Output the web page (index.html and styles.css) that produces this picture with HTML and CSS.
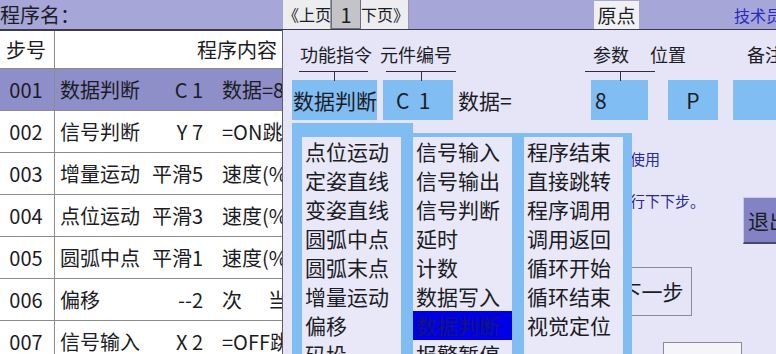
FILE: index.html
```html
<!DOCTYPE html>
<html lang="zh">
<head>
    <meta charset="UTF-8">
    <title>程序编辑</title>
    <link rel="stylesheet" href="styles.css">
</head>
<body>
    <div class="screen">
        <div class="topbar">
            <span class="prog-name">程序名：</span>
            <div class="pager">
                <span class="pg-btn">《上页</span>
                <span class="pg-num">1</span>
                <span class="pg-btn">下页》</span>
            </div>
            <span class="origin">原点</span>
            <span class="user">技术员</span>
        </div>

        <div class="steps">
            <div class="row head">
                <div class="no">步号</div>
                <div class="body"><span class="head-title">程序内容</span></div>
            </div>
            <div class="row sel">
                <div class="no">001</div>
                <div class="body"><span class="name">数据判断</span><span class="code">C 1</span><span class="rest">数据=8</span></div>
            </div>
            <div class="row">
                <div class="no">002</div>
                <div class="body"><span class="name">信号判断</span><span class="code">Y 7</span><span class="rest">=ON跳转</span></div>
            </div>
            <div class="row">
                <div class="no">003</div>
                <div class="body"><span class="name">增量运动</span><span class="code">平滑5</span><span class="rest">速度(%)</span></div>
            </div>
            <div class="row">
                <div class="no">004</div>
                <div class="body"><span class="name">点位运动</span><span class="code">平滑3</span><span class="rest">速度(%)</span></div>
            </div>
            <div class="row">
                <div class="no">005</div>
                <div class="body"><span class="name">圆弧中点</span><span class="code">平滑1</span><span class="rest">速度(%)</span></div>
            </div>
            <div class="row">
                <div class="no">006</div>
                <div class="body"><span class="name">偏移</span><span class="code">--2</span><span class="rest">次<span class="gap"></span>当前</span></div>
            </div>
            <div class="row">
                <div class="no">007</div>
                <div class="body"><span class="name">信号输入</span><span class="code">X 2</span><span class="rest">=OFF跳转</span></div>
            </div>
        </div>

        <div class="dialog">
            <div class="labels">
                <span class="lbl l-func">功能指令</span>
                <span class="lbl l-elem">元件编号</span>
                <span class="lbl l-param">参数</span>
                <span class="lbl l-pos">位置</span>
                <span class="lbl l-note">备注</span>
            </div>
            <div class="links">
                <span class="link k-func"></span>
                <span class="link k-elem"></span>
                <span class="link k-param"></span>
            </div>
            <div class="fields">
                <span class="field f-func">数据判断</span>
                <span class="field f-elem">C&nbsp;&nbsp;1</span>
                <span class="field-text">数据=</span>
                <span class="field f-param">8</span>
                <span class="field f-pos">P</span>
                <span class="field f-note"></span>
            </div>
            <div class="info-row">
                <div class="note">
                    <div>当元件数据等于设定参数时条件成立，供条件跳转使用</div>
                    <div>数据不相等时条件不成立，程序将跳过下一步去执行下下步。</div>
                </div>
                <div class="btn exit">退出</div>
            </div>
            <div class="btn next">下一步</div>
            <div class="btn spare"></div>

            <div class="dropdown">
                <ul class="col">
                    <li>点位运动</li>
                    <li>定姿直线</li>
                    <li>变姿直线</li>
                    <li>圆弧中点</li>
                    <li>圆弧末点</li>
                    <li>增量运动</li>
                    <li>偏移</li>
                    <li>码垛</li>
                </ul>
                <ul class="col">
                    <li>信号输入</li>
                    <li>信号输出</li>
                    <li>信号判断</li>
                    <li>延时</li>
                    <li>计数</li>
                    <li>数据写入</li>
                    <li class="active">数据判断</li>
                    <li>报警暂停</li>
                </ul>
                <ul class="col">
                    <li>程序结束</li>
                    <li>直接跳转</li>
                    <li>程序调用</li>
                    <li>调用返回</li>
                    <li>循环开始</li>
                    <li>循环结束</li>
                    <li>视觉定位</li>
                </ul>
            </div>
        </div>
    </div>
</body>
</html>
```

FILE: styles.css
```css
body {
    margin: 0;
    font-family: "Noto Sans CJK SC", "Noto Sans", sans-serif;
    color: #1c1c24;
    background: #ffffff;
}

.screen {
    position: relative;
    width: 776px;
    height: 354px;
    overflow: hidden;
}

/* top bar */
.topbar {
    display: flex;
    align-items: center;
    height: 29px;
    background: #a6a6d8;
    border-bottom: 2px solid #3c3c48;
    white-space: nowrap;
}

    .topbar > * {
        flex: none;
    }

.prog-name {
    width: 283px;
    font-size: 20px;
    line-height: 29px;
}

.pager {
    display: flex;
    height: 29px;
}

    .pager .pg-btn {
        width: 47px;
        background: #ededf0;
        font-size: 16px;
        line-height: 29px;
        text-align: center;
        border-right: 1px solid #9a9aa0;
    }

    .pager .pg-num {
        width: 28px;
        background: #c4c4c8;
        border: 1px solid #707078;
        border-top: 0;
        font-size: 20px;
        line-height: 30px;
        text-align: center;
    }

.origin {
    margin-left: 185px;
    width: 45px;
    height: 28px;
    background: #f0f0f5;
    font-size: 19px;
    line-height: 28px;
    text-align: center;
}

.user {
    margin-left: 95px;
    color: #2a2ac0;
    font-size: 16px;
}

/* step table */
.row {
    display: flex;
    height: 42px;
    box-sizing: border-box;
    border-bottom: 1px solid #8c8c8c;
    font-size: 20px;
    white-space: nowrap;
}

    .row.head {
        height: 38px;
        background: #ffffff;
    }

    .row.sel {
        background: #8e8ec8;
    }

    .row .no {
        width: 55px;
        flex: none;
        box-sizing: border-box;
        border-right: 1px solid #8c8c8c;
        display: flex;
        align-items: center;
        justify-content: center;
        padding-right: 2px;
    }

    .row .body {
        flex: 1;
        display: flex;
        align-items: center;
        padding-left: 5px;
        overflow: hidden;
    }

        .row .body > span {
            flex: none;
        }

.head-title {
    margin-left: 137px;
}

.name {
    width: 90px;
}

.code {
    width: 53px;
    text-align: right;
}

.rest {
    margin-left: 19px;
}

    .rest .gap {
        display: inline-block;
        width: 26px;
    }

/* dialog */
.dialog {
    position: absolute;
    left: 282px;
    top: 30px;
    right: 0;
    bottom: 0;
    background: #e5e5f7;
    border-left: 1px solid #5c5c68;
    white-space: nowrap;
    overflow: hidden;
}

.labels,
.links,
.fields,
.info-row {
    display: flex;
}

    .labels > *,
    .links > *,
    .fields > *,
    .info-row > * {
        flex: none;
    }

.labels {
    padding-top: 12px;
    font-size: 18px;
    line-height: 24px;
}

.l-func { margin-left: 17px; width: 74px; }
.l-elem { margin-left: 6px; width: 73px; }
.l-param { margin-left: 140px; width: 37px; }
.l-pos { margin-left: 20px; width: 37px; }
.l-note { margin-left: 60px; }

.links {
    margin-top: 5px;
    height: 9px;
}

.link {
    position: relative;
    height: 9px;
    box-sizing: border-box;
    border-top: 1px solid #303038;
}

    .link::after {
        content: "";
        position: absolute;
        left: 50%;
        top: 0;
        width: 1px;
        height: 9px;
        background: #303038;
    }

.k-func { margin-left: 16px; width: 69px; }
.k-elem { margin-left: 18px; width: 70px; }
.k-param { margin-left: 129px; width: 70px; }

.fields {
    align-items: center;
    height: 40px;
    font-size: 21px;
}

.field {
    height: 40px;
    line-height: 40px;
    background: #80bdf3;
    box-sizing: border-box;
}

.f-func { margin-left: 9px; width: 85px; padding-left: 1px; }
.f-elem { margin-left: 6px; width: 70px; padding-left: 13px; }
.field-text { margin-left: 5px; width: 133px; }
.f-param { width: 57px; padding-left: 4px; }
.f-pos { margin-left: 20px; width: 50px; text-align: center; }
.f-note { margin-left: 15px; width: 60px; }

.info-row {
    align-items: flex-start;
}

.note {
    margin-left: 17px;
    margin-top: 18px;
    width: 443px;
    color: #2828a0;
    font-size: 15px;
    line-height: 42px;
}

.btn {
    box-sizing: border-box;
    font-size: 21px;
    text-align: left;
}

    .btn.exit {
        margin-top: 77px;
        width: 60px;
        height: 47px;
        line-height: 45px;
        padding-left: 4px;
        background: #8282c4;
        border: 1px solid #c8c8e8;
        border-right-color: #48486c;
        border-bottom: 2px solid #48486c;
    }

    .btn.next {
        margin-left: 329px;
        margin-top: 23px;
        width: 80px;
        height: 49px;
        line-height: 47px;
        text-align: center;
        border: 1px solid #8c8c90;
    }

    .btn.spare {
        margin-left: 380px;
        margin-top: 26px;
        width: 79px;
        height: 40px;
        background: #f4f4fa;
        border: 1px solid #8c8c90;
    }

/* function picker */
.dropdown {
    position: absolute;
    left: 9px;
    top: 103px;
    width: 340px;
    height: 240px;
    display: flex;
    gap: 12px;
    padding: 4px 11px 0 10px;
    box-sizing: border-box;
    background: #80bdf3;
}

    .dropdown::before {
        content: "";
        position: absolute;
        left: 0;
        top: -10px;
        width: 121px;
        height: 10px;
        background: #80bdf3;
    }

    .dropdown .col {
        list-style: none;
        margin: 0;
        padding: 0;
        width: 99px;
        flex: none;
        background: #e8e8f8;
        font-size: 21px;
        line-height: 29px;
    }

        .dropdown .col li {
            padding-left: 3px;
        }

            .dropdown .col li.active {
                background: #0000e4;
                color: #14147a;
            }
```
